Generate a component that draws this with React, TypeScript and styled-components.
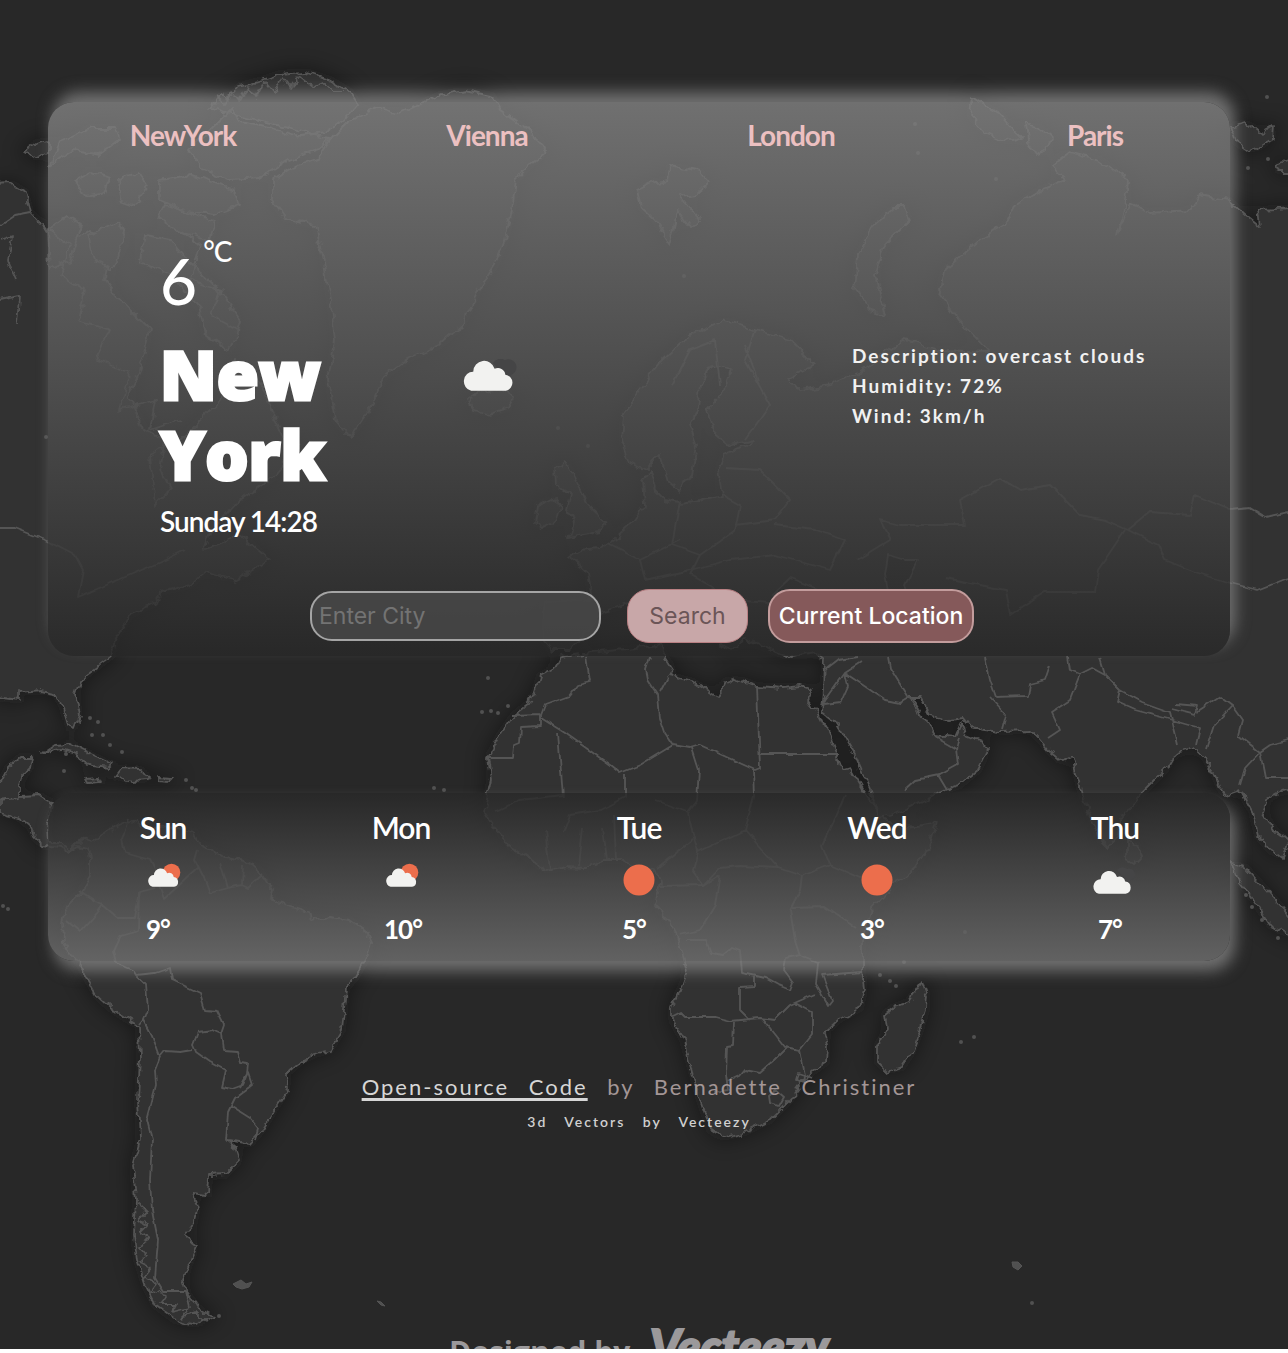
import React from "react";
import styled, { createGlobalStyle } from "styled-components";

const GlobalStyle = createGlobalStyle`
  * { box-sizing: border-box; }
  body { margin: 0; background: #fff; font-family: Lato, "Liberation Sans", sans-serif; }
`;

const Page = styled.div`
  position: relative;
  overflow: hidden;
  background: #282828;
  padding: 102px 58px 216px 48px;
`;

const MapBackdrop = styled.svg`
  position: absolute;
  inset: 0;
  width: 100%;
  height: 100%;
`;

const Panel = styled.section<{ $rise?: boolean }>`
  position: relative;
  border-radius: 26px;
  background: ${(p) =>
    p.$rise
      ? "linear-gradient(to top, rgba(112, 112, 112, 0.8), rgba(40, 40, 40, 0.8))"
      : "linear-gradient(to bottom, rgba(130, 130, 130, 0.8), rgba(40, 40, 40, 0.8))"};
  box-shadow: 5px ${(p) => (p.$rise ? "10px" : "-10px")} 15px rgba(130, 130, 130, 0.8);
`;

const WeatherPanel = styled(Panel)`
  padding: 16px 0 13px;
`;

const CityNav = styled.nav`
  display: grid;
  grid-template-columns: repeat(4, minmax(0, 1fr));
  gap: 34px;
  text-align: center;
`;

const CityLink = styled.a`
  color: #ecc0c1;
  font-size: 28px;
  line-height: 34px;
  font-weight: 700;
  letter-spacing: -1px;
  text-decoration: none;
`;

const Current = styled.div`
  display: grid;
  grid-template-columns: repeat(4, minmax(0, 1fr));
  gap: 34px;
  align-items: center;
  margin-top: 82px;
  color: #fff;
`;

const Place = styled.div`
  display: flex;
  flex-direction: column;
  gap: 6px;
  padding-left: 112px;
`;

const Temperature = styled.div`
  display: flex;
  align-items: flex-start;
  gap: 6px;
  font-size: 64px;
  line-height: 94px;
  font-weight: 500;
`;

const Unit = styled.span`
  font-size: 28px;
  line-height: 34px;
  letter-spacing: -1px;
`;

const City = styled.h1`
  margin: 0;
  font-family: "Open Sans", Lato, sans-serif;
  font-size: 68px;
  line-height: 80px;
  font-weight: 800;
  -webkit-text-stroke: 3px #fff;
`;

const Moment = styled.div`
  margin-top: 4px;
  font-size: 28px;
  line-height: 34px;
  font-weight: 600;
  letter-spacing: -1px;
  white-space: nowrap;
`;

const NowIcon = styled.svg`
  justify-self: center;
  width: 60px;
  height: 54px;
`;

const Facts = styled.ul`
  grid-column: 3 / 5;
  margin: 0;
  padding: 0 0 0 196px;
  list-style: none;
  font-size: 19px;
  line-height: 30px;
  font-weight: 700;
  letter-spacing: 2px;
  color: #f1f1f1;
  white-space: nowrap;
`;

const SearchForm = styled.form`
  display: flex;
  justify-content: center;
  align-items: center;
  gap: 20px;
  margin-top: 51px;
  padding-left: 6px;
`;

const CityInput = styled.input`
  width: 291px;
  height: 50px;
  margin-right: 6px;
  padding: 0 7px;
  border: 2px solid #a5a5a5;
  border-radius: 22px;
  background: rgba(72, 72, 72, 0.85);
  color: #fff;
  font: 400 23px Inter, sans-serif;
  &::placeholder { color: #737373; opacity: 1; }
`;

const Button = styled.button<{ $strong?: boolean }>`
  width: ${(p) => (p.$strong ? "206px" : "121px")};
  height: 54px;
  padding: 0;
  border: ${(p) => (p.$strong ? "2px solid #c39c9c" : "1px solid #b98083")};
  border-radius: 22px;
  background: ${(p) => (p.$strong ? "#85595a" : "#c8a7a8")};
  color: ${(p) => (p.$strong ? "#fff" : "#6b5557")};
  font: ${(p) => (p.$strong ? 500 : 400)} 23px Inter, sans-serif;
  white-space: nowrap;
`;

const Forecast = styled(Panel)`
  display: grid;
  grid-template-columns: repeat(5, minmax(0, 1fr));
  gap: 8px;
  margin-top: 137px;
  padding: 16px 0;
  color: #fff;
`;

const Day = styled.article`
  display: flex;
  flex-direction: column;
  align-items: center;
`;

const DayName = styled.h2`
  margin: 0 0 17px;
  font-size: 30px;
  line-height: 36px;
  font-weight: 600;
  letter-spacing: -1px;
`;

const DayIcon = styled.svg`
  width: 44px;
  height: 36px;
`;

const DayTemp = styled.div`
  width: 34px;
  margin-top: 15px;
  font-size: 26px;
  line-height: 32px;
  font-weight: 700;
  letter-spacing: -1px;
  white-space: nowrap;
`;

const Footer = styled.footer`
  position: relative;
  margin-top: 111px;
  text-align: center;
  letter-spacing: 2px;
  word-spacing: 12px;
`;

const Credit = styled.p`
  margin: 0 0 9px;
  color: #a39696;
  font-size: 22px;
  line-height: 30px;
`;

const SourceLink = styled.a`
  color: #d6d6d6;
  text-decoration: underline;
  text-decoration-thickness: 3px;
  text-underline-offset: 3px;
  text-decoration-skip-ink: none;
`;

const ArtCredit = styled.p`
  margin: 0;
  color: #d0d0d0;
  font-size: 14px;
  line-height: 22px;
  font-weight: 600;
`;

/* Land masses of the backdrop map */
const LAND = [
  // South and Central America
  "M0 812L18 817L30 827L35 838L44 846L60 848L68 852L78 846L88 848L90 860L90 876L80 892L70 902L65 912L63 922L64 942L72 955L80 965L88 980L97 996L110 1008L125 1018L139 1026L140 1060L138 1100L140 1140L133 1165L136 1200L134 1235L137 1260L145 1285L155 1305L175 1320L195 1325L213 1316L198 1308L188 1295L183 1280L190 1262L197 1245L184 1236L193 1225L197 1210L193 1192L208 1194L209 1176L225 1175L240 1160L236 1148L227 1140L250 1144L262 1130L275 1108L287 1090L286 1074L300 1062L315 1054L330 1050L342 1030L346 988L355 978L368 955L371 943L366 932L350 920L330 917L310 920L308 912L285 905L270 900L272 890L258 868L245 862L225 858L210 848L198 842L195 832L165 825L150 828L130 820L118 825L105 834L92 842L82 838L70 850L60 843L49 843L48 828L51 802L40 796L20 797L0 792Z",
  // Yucatan
  "M-5 792L8 768L20 757L32 757L30 768L22 776L19 786L19 798L-5 800Z",
  // North America
  "M-5 185L12 184L25 192L30 212L45 228L50 236L75 240L90 230L110 245L105 280L120 300L150 330L140 370L128 395L145 430L165 440L160 470L170 490L155 505L150 455L180 440L220 400L235 360L262 385L275 420L285 440L300 445L270 480L240 500L212 530L205 550L240 535L270 560L235 580L205 572L190 585L160 592L155 603L130 615L115 640L112 655L95 668L80 680L75 695L80 715L75 728L68 725L62 705L55 693L40 690L20 692L20 700L-5 697Z",
  // Arctic islands
  "M75 180L92 172L110 178L104 192L84 196Z",
  "M118 180L138 172L148 186L134 205L120 200Z",
  "M24 152L36 143L48 140L48 152L34 158Z",
  "M50 165L75 150L100 155L120 140L115 128L90 128L60 142Z",
  "M160 180L190 175L235 190L240 205L215 215L185 212L160 200Z",
  "M165 205L195 215L215 222L210 240L180 232L158 218Z",
  "M88 235L118 222L125 235L112 270L95 262Z",
  "M145 235L170 240L185 260L215 285L240 320L230 350L205 335L200 310L172 275L140 262Z",
  "M48 230L68 216L82 225L70 260L50 270Z",
  // Greenland and Ellesmere
  "M210 108L220 95L228 100L240 86L262 80L280 74L306 72L330 80L350 92L358 104L345 120L325 132L300 136L270 128L240 122L232 108L222 118L190 150L200 168L230 180L260 178L290 160L318 150L330 138Z",
  "M272 180L290 168L318 158L330 140L350 120L378 108L400 114L420 104L440 95L465 90L492 96L500 110L516 122L540 140L546 152L530 165L516 180L512 210L505 240L495 265L478 290L462 325L440 345L410 358L385 376L372 405L350 438L335 420L328 380L335 340L330 300L322 250L315 225L285 218L272 200Z",
  // Iceland
  "M468 400L480 392L500 388L514 396L508 408L488 414L474 410Z",
  // Svalbard
  "M638 190L655 182L668 180L670 166L700 172L708 182L695 194L680 196L700 220L692 228L678 210L670 244L655 220L642 208Z",
  // British Isles
  "M555 468L566 462L578 485L588 505L606 522L600 532L568 538L574 522L566 510L570 495L556 485Z",
  "M538 505L552 498L562 505L558 520L542 528L535 522Z",
  // Africa
  "M561 657L555 668L540 676L535 692L528 704L514 715L500 735L488 758L491 778L488 792L485 812L493 825L512 848L530 860L548 871L565 867L585 868L605 860L622 860L635 868L650 869L657 872L660 885L655 905L668 920L677 935L682 955L687 972L682 985L672 1008L672 1020L683 1040L690 1065L700 1100L710 1130L722 1138L745 1132L770 1120L790 1100L808 1075L826 1062L827 1045L824 1033L838 1020L860 1008L864 990L862 970L862 940L870 912L895 885L915 868L930 845L936 823L915 826L900 828L885 820L876 808L862 788L850 768L843 770L830 737L818 713L808 700L812 690L800 686L783 688L757 686L735 678L725 682L718 697L705 690L693 682L668 675L672 668L665 657L660 645L600 652L575 655Z",
  // Madagascar
  "M922 981L927 995L926 1010L920 1030L912 1052L902 1067L888 1072L878 1062L878 1045L886 1030L884 1015L892 1008L908 1002Z",
  // Eurasia
  "M825 660L815 652L790 657L765 648L745 638L735 650L722 645L705 622L690 602L676 602L690 626L685 642L665 618L650 598L628 604L600 612L588 630L570 650L552 650L543 640L543 602L592 600L588 572L568 557L580 550L600 548L615 538L635 520L645 505L643 480L650 470L655 490L665 500L680 503L700 500L722 495L718 470L725 455L748 445L755 440L730 445L714 432L708 408L725 390L730 370L712 365L700 385L697 410L690 425L697 445L692 475L680 492L668 482L660 455L645 470L630 462L622 440L624 415L640 390L660 363L690 335L725 320L755 330L790 340L815 365L790 378L800 390L830 385L860 372L870 365L905 340L940 350L990 352L960 320L938 290L945 270L980 240L1005 225L1015 205L1040 190L1065 180L1052 165L1070 152L1100 160L1128 180L1125 210L1118 235L1130 205L1150 213L1190 210L1200 195L1228 200L1245 215L1260 227L1258 210L1294 208L1294 790L1280 792L1266 800L1262 812L1275 830L1288 842L1283 860L1270 850L1258 836L1252 812L1240 790L1225 795L1220 788L1215 775L1205 758L1195 748L1180 752L1172 758L1165 770L1140 795L1120 820L1117 838L1108 848L1100 840L1082 795L1078 780L1072 757L1062 762L1050 752L1040 740L1030 730L1000 731L970 727L963 718L950 720L930 715L920 697L910 697L925 720L935 735L955 737L962 722L965 735L982 742L988 750L978 770L960 785L945 790L900 812L880 818L870 790L855 755L835 722L822 712L824 690Z",
  // Novaya Zemlya
  "M905 207L910 220L885 245L875 275L885 315L870 310L855 290L858 255L875 225L895 207Z",
  // Severnaya Zemlya
  "M972 97L985 106L1000 114L1014 130L1022 138L1008 142L985 132L970 116Z",
  "M1026 124L1040 128L1052 138L1046 150L1036 154L1028 142Z",
  // Right-hand archipelago
  "M1230 126L1245 122L1260 134L1274 126L1273 138L1250 152L1236 142Z",
  "M1275 165L1290 160L1294 172L1278 172Z",
  // Sumatra
  "M1231 862L1246 868L1264 888L1288 915L1294 938L1270 925L1252 898L1238 880Z",
  // Sri Lanka
  "M1127 842L1138 845L1141 857L1134 864L1127 860Z",
  // Cuba and Hispaniola
  "M43 753L55 745L70 744L90 754L112 764L108 768L92 766L75 754L62 750Z",
  "M116 776L122 768L140 769L152 776L150 780L130 781Z",
  "M86 779L98 778L100 782L88 783Z",
  "M158 778L172 779L168 783L158 782Z",
];

const BORDERS =
  "M139 892L138 930L120 935L113 950L116 963L133 970L136 975L155 973L170 968L172 980L200 993L205 1010L217 1011L224 1025L221 1034L223 1050L237 1051L240 1062L248 1063L247 1075L240 1088M221 1034L212 1030L198 1032L193 1045L196 1052L210 1062L225 1070L221 1087L232 1089L243 1085L248 1073L252 1085L235 1098L228 1112L226 1140M231 1106L250 1118L258 1128L255 1140M144 1020L148 1010L146 985L136 975M139 1026L144 1020L152 1035L160 1057L165 1051L180 1052L192 1050M160 1057L155 1070L156 1085L147 1120L152 1140L150 1180L152 1210L158 1240L155 1278L163 1291L186 1291L190 1308M80 892L95 902L103 905L98 912L80 932L66 920M103 905L118 918L135 918L140 892L155 888M128 820L122 838L125 853L150 860L155 870L165 898L198 868M198 850L195 860L205 880L210 893L228 888L220 862M243 865L242 885L228 888M262 875L248 888L242 885" +
  "M586 657L590 682L578 685L570 696L545 705L541 715L541 726L520 727L519 743L514 745L513 758L487 758M541 715L512 716M541 718L565 733L610 765L620 773L640 765L673 745L665 733L660 718L658 695L648 680L646 670L650 657M558 733L563 797M625 775L625 797L600 810L570 815L563 833M563 795L520 800L495 812M545 830L550 871M582 828L578 866M602 828L606 860M614 815L616 860M668 677L660 692M673 745L690 748L700 745L755 770L760 768L757 686M760 754L838 754M692 748L699 770L697 800L688 812M753 770L754 797L745 830L758 845L778 868M655 800L688 812L693 835L698 852L693 870L704 885L720 875L715 905L700 930L680 935M698 852L745 830M657 868L680 850L693 840M778 868L740 866L720 868L704 885L660 886M778 868L802 876L800 890L790 910L795 940L800 955M802 876L830 865L860 878L880 870M792 908L825 907L856 928M830 865L822 845L834 820L845 795M686 940L706 940L711 953L722 955L732 947L740 950L742 973L752 975L765 978L778 985L790 990L793 982L784 970L786 958L800 955L818 962L816 985L828 1005L832 1000L822 975L862 972M672 1017L680 1013L684 1017L715 1017L730 1021L760 1018L775 1020L790 1005L815 994M755 975L755 986L740 987L740 1010L750 1020M795 1003L812 1012L812 1035L800 1050L785 1047L762 1018M734 1022L733 1046L727 1047L726 1075L728 1090L714 1092M727 1082L740 1076L745 1070L760 1073L775 1060L787 1048M800 1050L805 1075L812 1078M776 1090L784 1097L779 1106L770 1103L769 1096ZM798 1073L804 1075L803 1082L796 1080Z" +
  "M0 528L15 528L48 541L75 555L83 570L78 597L130 575L165 560L185 550M0 225L15 215L30 212M825 670L838 660L858 657M845 673L848 685L840 703L823 705M845 673L885 700L900 703L910 697M888 657L890 668L908 697M822 705L845 673L862 662M935 737L956 749L958 765L940 775L915 780L904 790M938 775L947 790M960 737L957 750M985 657L990 680L996 697L1028 696L1030 684L1045 680L1050 665M990 698L1006 715L1002 730M1068 657L1070 670L1080 674L1070 700L1052 712L1060 730L1048 738M1080 674L1092 668L1105 675L1100 658M1105 675L1120 690L1142 702L1170 712L1172 720L1135 710L1117 702L1120 690M1172 708L1195 714L1197 706L1175 704M1172 720L1178 745M1172 720L1200 728L1196 745M1197 712L1220 697L1232 706L1214 725L1206 750M1232 706L1242 720L1238 735L1260 752L1270 745L1288 740M1260 752L1245 768L1240 785M1260 752L1265 778L1288 778" +
  "M858 560L890 540L880 520L900 525L965 525L960 500L1000 478L1020 490L1050 485L1080 515L1105 520L1128 530L1150 512L1190 515L1195 495L1230 510L1250 508L1265 517L1288 512M1128 530L1158 545L1165 560L1195 572L1230 583L1258 590L1288 578M945 578L1005 590L1010 615L1045 592L1095 592L1098 570L1125 530M672 385L690 350L715 340L720 385M745 345L758 380M755 330L745 360L770 405L745 440M722 495L740 505L735 530L700 555L672 545L680 500M735 525L775 520L790 500L760 470L725 468M680 540L640 560L610 545M640 560L645 580L690 570L730 560L775 555L830 570L845 540L815 530L775 525M700 555L690 575L735 600L790 605";

const SPECKS: [number, number][] = [
  [488, 678], [482, 712], [491, 711], [498, 713], [508, 706], [90, 718], [98, 722], [92, 735], [103, 735], [110, 745], [122, 752], [66, 754], [64, 771],
  [186, 780], [192, 788], [196, 790], [434, 788], [444, 790], [3, 906], [8, 909], [961, 1042], [974, 1037], [880, 975], [890, 981], [896, 986], [904, 962], [965, 932],
  [1267, 97], [1268, 159], [1248, 168], [915, 124], [918, 153], [996, 179], [1246, 895], [1252, 907], [1262, 920], [1278, 938], [558, 428], [588, 446], [684, 276], [1032, 1303], [219, 1316], [46, 437],
];

const FJORDS =
  "M138 1203L146 1210L138 1220L148 1224L140 1232L150 1240L138 1246L146 1255L140 1262L152 1268L144 1278L156 1284L150 1292L166 1296L160 1304L176 1304L172 1312L188 1308L182 1318L196 1312L206 1322M50 230L70 245L60 275L85 290L78 320L110 330L95 360L130 372L120 410L155 400L150 430L180 420M0 240L12 236L8 262L16 280M0 300L20 296L18 325M180 230L200 245L190 280L222 290L210 315L238 330M216 96L224 104L232 92L240 102L248 86L256 98L264 82L274 94L282 78L290 88L300 76L312 86L322 82L332 92L344 92";

const ISLETS =
  "M233 1284L241 1280L246 1284L252 1282L249 1287L242 1289L236 1287ZM377 1301L381 1302L385 1306L381 1305ZM1012 1262L1018 1262L1022 1266L1018 1270L1013 1267Z";

const WorldMap = () => (
  <MapBackdrop viewBox="0 0 1288 1349" preserveAspectRatio="xMidYMin slice" aria-hidden="true">
    <defs>
      <filter id="coast" x="-5%" y="-5%" width="110%" height="110%">
        <feTurbulence type="fractalNoise" baseFrequency="0.09" numOctaves="3" seed="4" result="noise" />
        <feDisplacementMap in="SourceGraphic" in2="noise" scale="9" xChannelSelector="R" yChannelSelector="G" />
      </filter>
      <filter id="border" x="-5%" y="-5%" width="110%" height="110%">
        <feTurbulence type="fractalNoise" baseFrequency="0.07" numOctaves="2" seed="9" result="noise" />
        <feDisplacementMap in="SourceGraphic" in2="noise" scale="5" xChannelSelector="R" yChannelSelector="G" />
      </filter>
      <filter id="depth" x="-5%" y="-5%" width="110%" height="110%">
        <feGaussianBlur stdDeviation="10" />
      </filter>
    </defs>
    <g filter="url(#depth)" opacity="0.4" fill="#0c0c0c" stroke="#0c0c0c" strokeWidth="8">
      {LAND.map((d, i) => <path key={i} d={d} />)}
    </g>
    <g filter="url(#coast)" fill="#323232" stroke="#545454" strokeWidth="1.8" strokeLinejoin="round">
      {LAND.map((d, i) => <path key={i} d={d} />)}
      <path d={FJORDS} fill="none" />
    </g>
    <g filter="url(#border)" fill="none" stroke="#555" strokeWidth="1.8" strokeLinejoin="round">
      <path d={BORDERS} />
      <path d="M885 575L888 555L905 560L918 560L905 585L912 612L890 600ZM772 595L790 578L820 590L840 595L820 605L785 608Z" fill="#262626" />
    </g>
    <path d={ISLETS} fill="#505050" stroke="#555" />
    <g fill="#515151">
      {SPECKS.map(([x, y], i) => <circle key={i} cx={x} cy={y} r="2" />)}
    </g>
    <g fill="#9b999b">
      <text x="449" y="1363" fontFamily="Open Sans, sans-serif" fontSize="30" fontWeight="700">Designed by</text>
      <text x="650" y="1364" fontFamily="Lato, sans-serif" fontSize="47" fontWeight="900" fontStyle="italic" stroke="#9b999b" strokeWidth="2">Vecteezy</text>
    </g>
  </MapBackdrop>
);

type Sky = "clouds" | "partly" | "clear";

const Cloud = () => (
  <path d="M8.500 31.500a8.500 9 0 0 1 2-17.800a10.200 10.200 0 0 1 20-2.700a7 7 0 0 1 10 5.500a7.600 7.600 0 0 1 .5 15z" fill="#f2f2f0" />
);

const SkyDrawing = ({ sky }: { sky: Sky }) => {
  if (sky === "clear") return <circle cx="22" cy="18" r="15.500" fill="#ec6e4c" />;
  if (sky === "partly")
    return (
      <>
        <circle cx="30.500" cy="10.500" r="8.800" fill="#ec6e4c" />
        <g transform="translate(6 4) scale(.66)"><Cloud /></g>
      </>
    );
  return (
    <>
      <path d="M24 8a7 7 0 0 1 10-1a6 6 0 0 1 7 9l-6 4z" fill="#454546" />
      <g transform="translate(-1 6) scale(.82)"><Cloud /></g>
    </>
  );
};

const days: { name: string; sky: Sky; temp: number }[] = [
  { name: "Sun", sky: "partly", temp: 9 },
  { name: "Mon", sky: "partly", temp: 10 },
  { name: "Tue", sky: "clear", temp: 5 },
  { name: "Wed", sky: "clear", temp: 3 },
  { name: "Thu", sky: "clouds", temp: 7 },
];

export default function App() {
  return (
    <>
      <GlobalStyle />
      <Page>
        <WorldMap />
        <WeatherPanel>
          <CityNav>
            {["NewYork", "Vienna", "London", "Paris"].map((city) => (
              <CityLink key={city} href="#">{city}</CityLink>
            ))}
          </CityNav>
          <Current>
            <Place>
              <Temperature>6<Unit>°C</Unit></Temperature>
              <City>New York</City>
              <Moment>Sunday 14:28</Moment>
            </Place>
            <NowIcon viewBox="0 0 60 54" role="img" aria-label="overcast clouds">
              <path d="M36 4a9 9 0 0 1 12-3a8 8 0 0 1 9 13l-8 6z" fill="#454546" />
              <g transform="translate(5 -2) scale(1.07)"><Cloud /></g>
            </NowIcon>
            <Facts>
              <li>Description: overcast clouds</li>
              <li>Humidity: 72%</li>
              <li>Wind: 3km/h</li>
            </Facts>
          </Current>
          <SearchForm onSubmit={(e) => e.preventDefault()}>
            <CityInput type="text" placeholder="Enter City" aria-label="Enter City" />
            <Button type="submit">Search</Button>
            <Button type="button" $strong>Current Location</Button>
          </SearchForm>
        </WeatherPanel>
        <Forecast $rise>
          {days.map((day) => (
            <Day key={day.name}>
              <DayName>{day.name}</DayName>
              <DayIcon viewBox="0 0 44 36" aria-hidden="true"><SkyDrawing sky={day.sky} /></DayIcon>
              <DayTemp>{day.temp}°</DayTemp>
            </Day>
          ))}
        </Forecast>
        <Footer>
          <Credit><SourceLink href="#">Open-source Code</SourceLink> by Bernadette Christiner</Credit>
          <ArtCredit>3d Vectors by Vecteezy</ArtCredit>
        </Footer>
      </Page>
    </>
  );
}
